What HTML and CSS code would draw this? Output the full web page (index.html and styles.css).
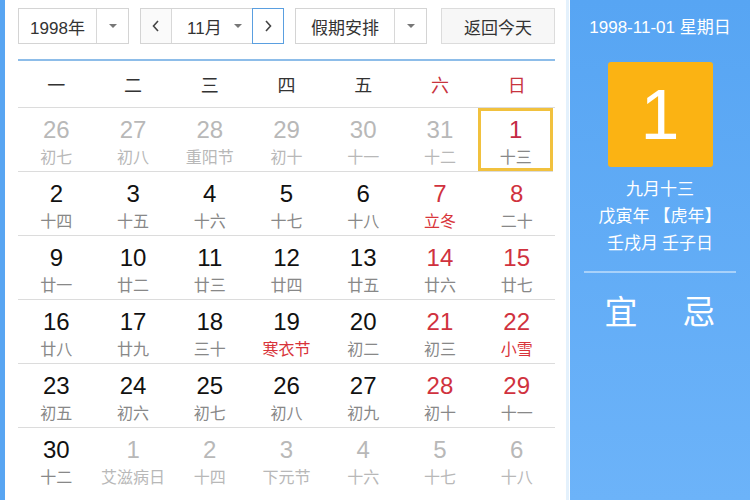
FILE: index.html
```html
<!DOCTYPE html>
<html lang="zh">
<head>
<meta charset="utf-8">
<link rel="stylesheet" href="styles.css">
</head>
<body>
<div class="page">
  <div class="edge"></div>
  <div class="main">
    <div class="controls">
      <div class="sel year"><span class="sel-text">1998年</span><span class="sel-arrow"><i class="caret"></i></span></div>
      <div class="month-group">
        <span class="nav prev"><svg width="10" height="14" viewBox="0 0 10 14"><path d="M7 2 L2.5 7 L7 12" fill="none" stroke="#444" stroke-width="1.6"/></svg></span>
        <span class="month"><span class="month-text">11月</span><i class="caret"></i></span>
        <span class="nav next"><svg width="10" height="14" viewBox="0 0 10 14"><path d="M3 2 L7.5 7 L3 12" fill="none" stroke="#444" stroke-width="1.6"/></svg></span>
      </div>
      <div class="sel holiday"><span class="sel-text">假期安排</span><span class="sel-arrow"><i class="caret"></i></span></div>
      <div class="btn">返回今天</div>
    </div>
    <div class="cal">
      <div class="wk">一</div><div class="wk">二</div><div class="wk">三</div><div class="wk">四</div><div class="wk">五</div><div class="wk red">六</div><div class="wk red">日</div>

      <div class="cell other"><b>26</b><s>初七</s></div>
      <div class="cell other"><b>27</b><s>初八</s></div>
      <div class="cell other"><b>28</b><s>重阳节</s></div>
      <div class="cell other"><b>29</b><s>初十</s></div>
      <div class="cell other"><b>30</b><s>十一</s></div>
      <div class="cell other"><b>31</b><s>十二</s></div>
      <div class="cell wkend today"><b>1</b><s>十三</s></div>

      <div class="cell"><b>2</b><s>十四</s></div>
      <div class="cell"><b>3</b><s>十五</s></div>
      <div class="cell"><b>4</b><s>十六</s></div>
      <div class="cell"><b>5</b><s>十七</s></div>
      <div class="cell"><b>6</b><s>十八</s></div>
      <div class="cell wkend"><b>7</b><s class="fest">立冬</s></div>
      <div class="cell wkend"><b>8</b><s>二十</s></div>

      <div class="cell"><b>9</b><s>廿一</s></div>
      <div class="cell"><b>10</b><s>廿二</s></div>
      <div class="cell"><b>11</b><s>廿三</s></div>
      <div class="cell"><b>12</b><s>廿四</s></div>
      <div class="cell"><b>13</b><s>廿五</s></div>
      <div class="cell wkend"><b>14</b><s>廿六</s></div>
      <div class="cell wkend"><b>15</b><s>廿七</s></div>

      <div class="cell"><b>16</b><s>廿八</s></div>
      <div class="cell"><b>17</b><s>廿九</s></div>
      <div class="cell"><b>18</b><s>三十</s></div>
      <div class="cell"><b>19</b><s class="fest">寒衣节</s></div>
      <div class="cell"><b>20</b><s>初二</s></div>
      <div class="cell wkend"><b>21</b><s>初三</s></div>
      <div class="cell wkend"><b>22</b><s class="fest">小雪</s></div>

      <div class="cell"><b>23</b><s>初五</s></div>
      <div class="cell"><b>24</b><s>初六</s></div>
      <div class="cell"><b>25</b><s>初七</s></div>
      <div class="cell"><b>26</b><s>初八</s></div>
      <div class="cell"><b>27</b><s>初九</s></div>
      <div class="cell wkend"><b>28</b><s>初十</s></div>
      <div class="cell wkend"><b>29</b><s>十一</s></div>

      <div class="cell last"><b>30</b><s>十二</s></div>
      <div class="cell last other"><b>1</b><s>艾滋病日</s></div>
      <div class="cell last other"><b>2</b><s>十四</s></div>
      <div class="cell last other"><b>3</b><s>下元节</s></div>
      <div class="cell last other"><b>4</b><s>十六</s></div>
      <div class="cell last other"><b>5</b><s>十七</s></div>
      <div class="cell last other"><b>6</b><s>十八</s></div>
    </div>
  </div>
  <div class="sep"></div>
  <div class="panel">
    <div class="p-date">1998-11-01 星期日</div>
    <div class="p-day">1</div>
    <div class="p-lunar">
      <div>九月十三</div>
      <div>戊寅年 【虎年】</div>
      <div>壬戌月 壬子日</div>
    </div>
    <div class="p-line"></div>
    <div class="p-yj"><span>宜</span><span>忌</span></div>
  </div>
</div>
</body>
</html>
```

FILE: styles.css
```css
html, body {
  margin: 0;
  padding: 0;
  background: #fff;
}
body {
  font-family: "Liberation Sans", "Noto Sans CJK SC", sans-serif;
  color: #222;
}
.page {
  display: flex;
  width: 750px;
  height: 500px;
  overflow: hidden;
}
.edge {
  width: 5px;
  background: #58a5f2;
  flex: none;
}
.main {
  width: 537px;
  padding: 8px 11px 0 13px;
  flex: none;
}
.sep {
  width: 3px;
  background: #e4f1fc;
  flex: none;
}
.panel {
  flex: 1;
  margin-left: 1px;
  background: linear-gradient(#57a5f3, #6cb3f9);
  color: #fff;
  display: flex;
  flex-direction: column;
  align-items: center;
}

/* controls */
.controls {
  display: flex;
  height: 36px;
  font-size: 17px;
  color: #333;
}
.sel {
  display: flex;
  border: 1px solid #d4d4d4;
  box-sizing: border-box;
  background: #fff;
}
.sel-text {
  display: flex;
  align-items: center;
  justify-content: center;
  border-right: 1px solid #d8d8d8;
}
.sel-arrow {
  flex: 1;
  display: flex;
  align-items: center;
  justify-content: center;
  background: #fff;
}
.caret {
  display: inline-block;
  width: 0;
  height: 0;
  border-left: 4px solid transparent;
  border-right: 4px solid transparent;
  border-top: 4px solid #777;
}
.year { width: 111px; }
.year .sel-text { width: 77px; }
.holiday { width: 132px; margin-left: 11px; }
.holiday .sel-text { width: 98px; }
.month-group {
  display: flex;
  width: 144px;
  margin-left: 11px;
  border: 1px solid #d4d4d4;
  box-sizing: border-box;
}
.nav {
  display: flex;
  align-items: center;
  justify-content: center;
  width: 30px;
  background: #fafafa;
}
.prev { border-right: 1px solid #d8d8d8; }
.next {
  border: 1px solid #5a9fe0;
  margin: -1px -1px -1px 0;
  width: 30px;
  background: #fff;
}
.month {
  flex: 1;
  display: flex;
  align-items: center;
  padding-left: 15px;
}
.month-text {
  margin-right: 12px;
}
.btn {
  width: 114px;
  margin-left: 14px;
  border: 1px solid #dcdcdc;
  box-sizing: border-box;
  background: #f7f7f7;
  display: flex;
  align-items: center;
  justify-content: center;
}
.holiday .sel-text, .btn {
  font-family: "Noto Sans CJK SC", sans-serif;
}

/* calendar */
.cal {
  margin-top: 15px;
  border-top: 2px solid #8dbde9;
  display: grid;
  grid-template-columns: repeat(7, 1fr);
}
.wk {
  height: 46px;
  display: flex;
  align-items: center;
  justify-content: center;
  font-size: 18px;
  color: #333;
  border-bottom: 1px solid #dcdcdc;
  font-family: "Noto Sans CJK SC", sans-serif;
}
.wk.red { color: #c8343e; }
.cell {
  height: 63px;
  border-bottom: 1px solid #dcdcdc;
  display: flex;
  flex-direction: column;
  align-items: center;
}
.cell.last { border-bottom: none; }
.cell b {
  font-weight: normal;
  font-size: 24px;
  line-height: 26px;
  margin-top: 9px;
  color: #111;
}
.cell s {
  text-decoration: none;
  font-size: 16px;
  line-height: 20px;
  margin-top: 3px;
  color: #888;
  font-family: "Noto Sans CJK SC", sans-serif;
}
.cell.wkend b { color: #d0323e; }
.cell s.fest { color: #d8343a; }
.cell.other b { color: #b8b8b8; }
.cell.other s { color: #b8b8b8; }
.cell.today {
  box-shadow: inset 0 0 0 3px #f1c13e;
  margin: 0 2px 0 0;
}
.cell.today b { color: #c42a45; }

/* panel */
.p-date {
  margin-top: 17px;
  font-size: 17px;
  line-height: 22px;
}
.p-day {
  margin-top: 23px;
  width: 105px;
  height: 105px;
  border-radius: 3px;
  background: #fbb313;
  display: flex;
  align-items: center;
  justify-content: center;
  font-size: 70px;
  line-height: 1;
}
.p-lunar {
  margin-top: 7px;
  text-align: center;
  font-size: 17px;
  line-height: 27px;
  font-family: "Noto Sans CJK SC", sans-serif;
}
.p-line {
  width: 152px;
  height: 2px;
  background: rgba(255,255,255,0.45);
  margin-top: 16px;
}
.p-yj {
  margin-top: 17px;
  display: flex;
  gap: 45px;
  font-size: 33px;
  line-height: 40px;
  font-family: "Noto Sans CJK SC", sans-serif;
}
```
